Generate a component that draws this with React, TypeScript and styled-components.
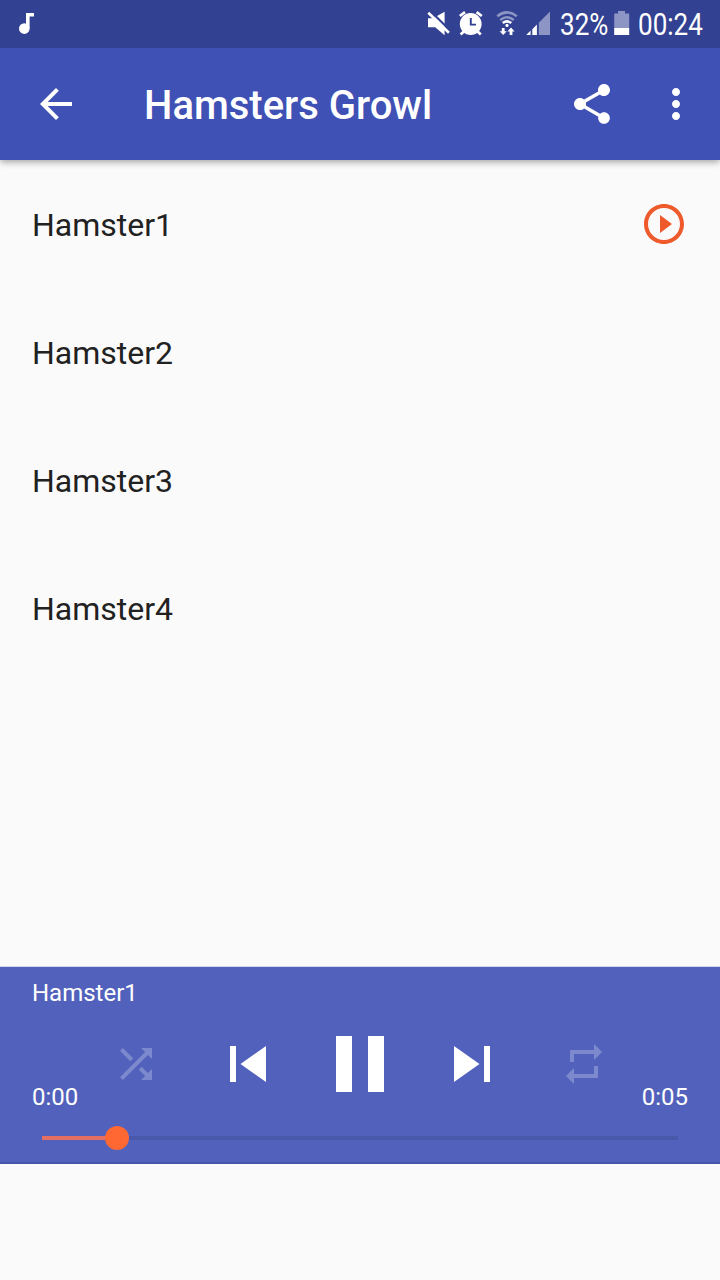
import React from "react";
import styled, { createGlobalStyle } from "styled-components";

const GlobalStyle = createGlobalStyle`
  * { box-sizing: border-box; }
  body {
    margin: 0;
    background: #fafafa;
    font-family: Roboto, "Liberation Sans", sans-serif;
  }
`;

const Screen = styled.div`
  display: flex;
  flex-direction: column;
  width: 720px;
  height: 1280px;
  overflow: hidden;
  background: #fafafa;
`;

const StatusBar = styled.header`
  display: flex;
  align-items: center;
  justify-content: space-between;
  height: 48px;
  flex: none;
  padding: 0 14px 0 18px;
  background: #324191;
  color: #fff;
  z-index: 2;

  svg { display: block; }
`;

const StatusIcons = styled.div`
  display: flex;
  align-items: center;
  height: 48px;
`;

const StatusText = styled.div<{ $width: number }>`
  width: ${({ $width }) => $width}px;
  padding-top: 2px;
  font-size: 31px;
  line-height: 46px;
  white-space: nowrap;

  span {
    display: inline-block;
    transform: scaleX(0.84);
    transform-origin: left center;
  }
`;

const AppBar = styled.nav`
  display: flex;
  align-items: center;
  height: 112px;
  flex: none;
  padding: 0 20px 0 32px;
  background: #3f51b5;
  color: #fff;
  box-shadow: 0 2px 7px rgba(0, 0, 0, 0.36);
  z-index: 1;
`;

const Title = styled.h1`
  flex: 1;
  margin: 0 0 0 64px;
  padding-top: 4px;
  font-size: 40px;
  line-height: 48px;
  font-weight: 500;
`;

const IconButton = styled.button<{ $size?: number; $dim?: boolean }>`
  display: block;
  flex: none;
  width: ${({ $size = 48 }) => $size}px;
  height: ${({ $size = 48 }) => $size}px;
  padding: 0;
  border: 0;
  background: none;
  color: inherit;
  opacity: ${({ $dim }) => ($dim ? 0.25 : 1)};

  svg { display: block; width: 100%; height: 100%; }
`;

const BarActions = styled.div`
  display: flex;
  gap: 36px;
`;

const TrackList = styled.ul`
  flex: 1;
  margin: 0;
  padding: 0;
  list-style: none;
`;

const TrackRow = styled.li`
  display: flex;
  align-items: center;
  justify-content: space-between;
  height: 128px;
  padding: 0 32px;
  font-size: 32px;
  line-height: 40px;
  color: #212121;
`;

const TrackName = styled.span`
  padding-top: 2px;
`;

const PlayingMark = styled.span`
  color: #ee5a2c;

  svg { display: block; width: 48px; height: 48px; }
`;

const Player = styled.section`
  display: flex;
  flex-direction: column;
  height: 198px;
  flex: none;
  margin-bottom: 116px;
  border-top: 1px solid #d3d7ef;
  border-bottom: 2px solid #4756aa;
  background: #5262bc;
  color: #fff;
`;

const NowPlaying = styled.div`
  height: 49px;
  padding: 11px 32px 0;
  font-size: 24px;
  line-height: 30px;
`;

const Controls = styled.div`
  display: grid;
  grid-template-columns: repeat(5, 112px);
  justify-content: center;
  place-items: center;
  height: 96px;
`;

const Times = styled.div`
  display: flex;
  justify-content: space-between;
  margin-top: -31px;
  padding: 0 32px;
  font-size: 24px;
  line-height: 32px;
`;

const Seek = styled.div`
  display: flex;
  align-items: center;
  height: 24px;
  margin: 13px 42px 0;
`;

const Elapsed = styled.div`
  width: 62.5px;
  height: 4px;
  background: #e37062;
`;

const Thumb = styled.div`
  width: 24px;
  height: 24px;
  border-radius: 50%;
  background: #ff6833;
`;

const Remaining = styled.div`
  flex: 1;
  height: 4px;
  background: #4a58a9;
`;

const Icon = ({ d }: { d: string }) => (
  <svg viewBox="0 0 24 24" fill="currentColor" aria-hidden="true">
    <path d={d} />
  </svg>
);

const paths = {
  back: "M20 11H7.83l5.59-5.59L12 4l-8 8 8 8 1.41-1.41L7.83 13H20v-2z",
  share:
    "M18 16.08c-.76 0-1.44.3-1.96.77L8.91 12.7c.05-.23.09-.46.09-.7s-.04-.47-.09-.7l7.05-4.11c.54.5 1.25.81 2.04.81 1.66 0 3-1.34 3-3s-1.34-3-3-3-3 1.34-3 3c0 .24.04.47.09.7L8.04 9.81C7.5 9.31 6.79 9 6 9c-1.66 0-3 1.34-3 3s1.34 3 3 3c.79 0 1.5-.31 2.04-.81l7.12 4.16c-.05.21-.08.43-.08.65 0 1.61 1.31 2.92 2.92 2.92s2.92-1.31 2.92-2.92-1.31-2.92-2.92-2.92z",
  more: "M12 8c1.1 0 2-.9 2-2s-.9-2-2-2-2 .9-2 2 .9 2 2 2zm0 2c-1.1 0-2 .9-2 2s.9 2 2 2 2-.9 2-2-.9-2-2-2zm0 6c-1.1 0-2 .9-2 2s.9 2 2 2 2-.9 2-2-.9-2-2-2z",
  playing:
    "M10 16.5l6-4.5-6-4.5v9zM12 2C6.48 2 2 6.48 2 12s4.48 10 10 10 10-4.48 10-10S17.52 2 12 2zm0 18c-4.41 0-8-3.59-8-8s3.59-8 8-8 8 3.59 8 8-3.59 8-8 8z",
  shuffle:
    "M10.59 9.17L5.41 4 4 5.41l5.17 5.17 1.42-1.41zM14.5 4l2.04 2.04L4 18.59 5.41 20 17.96 7.46 20 9.5V4h-5.5zm.33 9.41l-1.41 1.41 3.13 3.13L14.5 20H20v-5.5l-2.04 2.04-3.13-3.13z",
  previous: "M6 6h2v12H6zm3.5 6l8.5 6V6z",
  pause: "M6 19h4V5H6v14zm8-14v14h4V5h-4z",
  next: "M6 18l8.5-6L6 6v12zM16 6v12h2V6h-2z",
  repeat: "M7 7h10v3l4-4-4-4v3H5v6h2V7zm10 10H7v-3l-4 4 4 4v-3h12v-6h-2v4z",
};

const tracks = ["Hamster1", "Hamster2", "Hamster3", "Hamster4"];

const NoteIcon = () => (
  <svg width="18" height="48" viewBox="0 0 18 48" fill="#fff">
    <circle cx="6.3" cy="28.6" r="5.3" />
    <path d="M8 13h8v3.6h-4.4v12H8z" />
  </svg>
);

/* Muted speaker, alarm, wifi and mobile signal, left to right. */
const SystemIcons = () => (
  <svg width="134" height="48" viewBox="426 0 134 48" fill="#fff">
    <path d="M428 18.2h5l11.6-6.4v23.4l-9.4-8H428z" />
    <path d="M430 10.7l20.5 20.2" stroke="#324191" strokeWidth="2.2" />
    <path d="M428.3 12.8l20.6 19.9" stroke="#fff" strokeWidth="2.6" />
    <circle cx="470.7" cy="24" r="10.9" />
    <path d="M459.8 16l5.2-3.9M476.6 12.1l5.2 3.9M463.8 31.5l-3.2 3M477.6 31.5l3.2 3" stroke="#fff" strokeWidth="2.7" />
    <path d="M470.8 18v6.6h5.2" fill="none" stroke="#324191" strokeWidth="1.9" />
    <g fill="none" stroke="#8c95c4" strokeWidth="2.5">
      <path d="M497.2 16.2q9.8-7.7 19.6 0" />
      <path d="M500.2 19.9q6.8-5.2 13.6 0" />
    </g>
    <path d="M502.7 23.1q4.3-3.4 8.6 0" fill="none" stroke="#fff" strokeWidth="2.5" />
    <circle cx="507" cy="25.4" r="1.6" />
    <path d="M501.8 28h2.8v3.2h2.2L503.2 35l-3.6-3.8h2.2zM509.6 35h2.8v-3.5h2.2l-3.6-3.9-3.6 3.9h2.2z" />
    <path d="M538.8 22.8L550 11.6V35h-11.2z" fill="#8c95c4" />
    <path d="M526.2 35l4.4-4.4V35zM532.3 29.2l4.6-4.6V35h-4.6z" />
  </svg>
);

const BatteryIcon = () => (
  <svg width="26" height="48" viewBox="0 0 26 48">
    <path d="M6 13.5V11h7v2.5h4.2v15H2.2v-15z" fill="#8c95c4" />
    <path d="M2.2 28h15v7h-15z" fill="#fff" />
  </svg>
);

export default function App() {
  return (
    <>
      <GlobalStyle />
      <Screen>
        <StatusBar>
          <NoteIcon />
          <StatusIcons>
            <SystemIcons />
            <StatusText $width={52}><span>32%</span></StatusText>
            <BatteryIcon />
            <StatusText $width={68}><span>00:24</span></StatusText>
          </StatusIcons>
        </StatusBar>

        <AppBar>
          <IconButton aria-label="Back"><Icon d={paths.back} /></IconButton>
          <Title>Hamsters Growl</Title>
          <BarActions>
            <IconButton aria-label="Share"><Icon d={paths.share} /></IconButton>
            <IconButton aria-label="More"><Icon d={paths.more} /></IconButton>
          </BarActions>
        </AppBar>

        <TrackList>
          {tracks.map((name, index) => (
            <TrackRow key={name}>
              <TrackName>{name}</TrackName>
              {index === 0 && <PlayingMark><Icon d={paths.playing} /></PlayingMark>}
            </TrackRow>
          ))}
        </TrackList>

        <Player>
          <NowPlaying>{tracks[0]}</NowPlaying>
          <Controls>
            <IconButton $dim aria-label="Shuffle"><Icon d={paths.shuffle} /></IconButton>
            <IconButton $size={72} aria-label="Previous"><Icon d={paths.previous} /></IconButton>
            <IconButton $size={96} aria-label="Pause"><Icon d={paths.pause} /></IconButton>
            <IconButton $size={72} aria-label="Next"><Icon d={paths.next} /></IconButton>
            <IconButton $dim aria-label="Repeat"><Icon d={paths.repeat} /></IconButton>
          </Controls>
          <Times>
            <span>0:00</span>
            <span>0:05</span>
          </Times>
          <Seek>
            <Elapsed />
            <Thumb />
            <Remaining />
          </Seek>
        </Player>
      </Screen>
    </>
  );
}
